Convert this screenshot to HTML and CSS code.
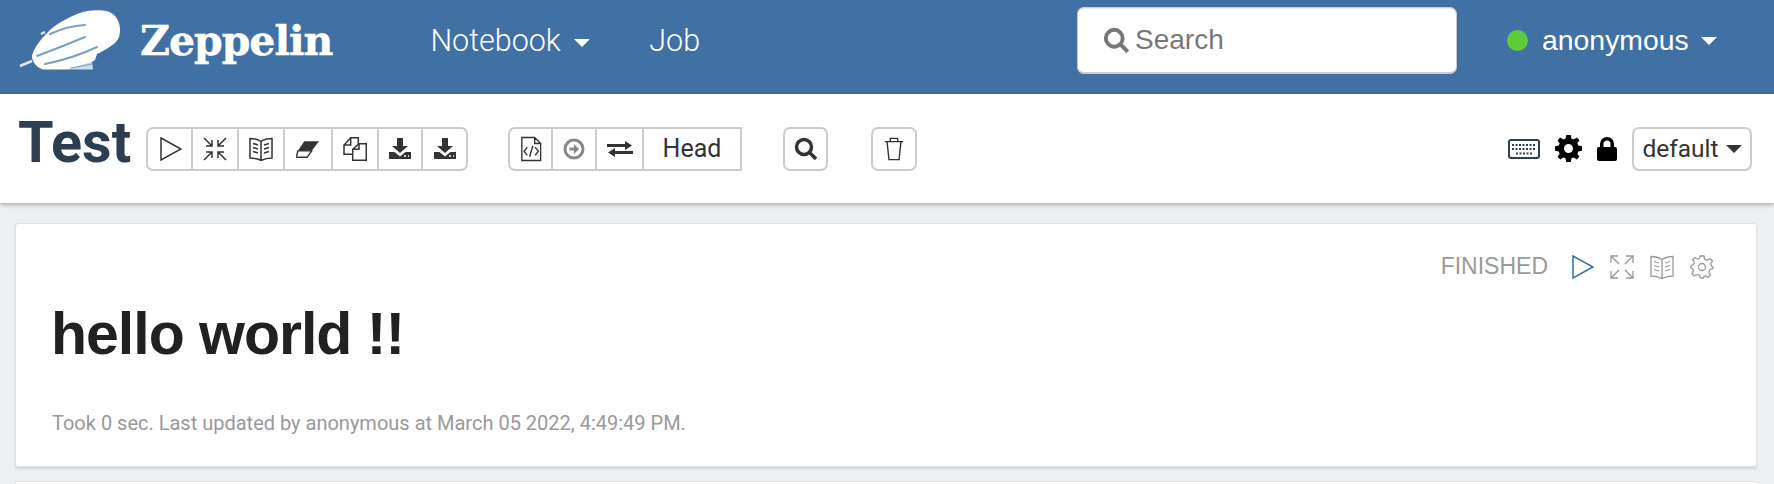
FILE: index.html
```html
<!DOCTYPE html>
<html lang="en">
<head>
    <meta charset="UTF-8">
    <title>Zeppelin</title>
    <link rel="stylesheet" href="styles.css">
</head>
<body>
    <!--顶部导航-->
    <nav class="navbar">
        <svg class="logo" viewBox="0 0 102 62" width="102" height="62">
            <path class="logo-body" d="M13 46C15 38 20 31 31 20C40 12 55 4 68 1C75 0 84 0 89 1.500C97 4 101 12 101 20C101 28 98 32 92 36C86 40 82 42 78 44L76 50C70 54 62 56 48 59.500H24C19 58 13 53 13 46Z"/>
            <path class="logo-line" d="M31 24Q48 16 66 15M18 46Q42 37 66 27M26 54Q55 48 78 37"/>
            <path class="logo-fin" d="M1 56L13 51M22 24L26 22"/>
            <path class="logo-gondola" d="M48 59.500L73 52L74 59.500Z"/>
            <path class="logo-line thin" d="M52 58L73 54"/>
        </svg>
        <a class="brand">Zeppelin</a>
        <a class="nav-link notebook">Notebook <span class="caret"></span></a>
        <a class="nav-link job">Job</a>
        <div class="search-box">
            <svg class="search-icon" viewBox="0 0 24 24" width="27" height="27"><circle cx="10" cy="10" r="7.5"/><path d="M15.5 15.5L22 22"/></svg>
            <span class="search-text">Search</span>
        </div>
        <div class="user">
            <span class="status-dot"></span>
            <span class="user-name">anonymous</span>
            <span class="caret"></span>
        </div>
    </nav>

    <!--工具栏-->
    <header class="toolbar">
        <h1 class="note-title">Test</h1>
        <div class="btn-group group-run">
            <span class="btn w43"><svg class="ico" viewBox="0 0 24 24"><path d="M3 1L23 12L3 23Z"/></svg></span>
            <span class="btn w46"><svg class="ico" viewBox="0 0 24 24"><path d="M1 1L9 9M3 9H9V3M23 1L15 9M21 9H15V3M1 23L9 15M3 15H9V21M23 23L15 15M21 15H15V21"/></svg></span>
            <span class="btn w46"><svg class="ico" viewBox="0 0 24 24"><path d="M12 4.500C9 2.500 5 1.500 1 1.500V21C5 21 9 22 12 23.500C15 22 19 21 23 21V1.500C19 1.500 15 2.500 12 4.500ZM12 4.500V23.500M4 6.500L9 8M4 10.500L9 12M4 14.500L9 16M20 6.500L15 8M20 10.500L15 12M20 14.500L15 16"/></svg></span>
            <span class="btn w48"><svg class="ico" viewBox="0 0 26 20"><path class="solid" d="M9 1.500H25L17 12H2Z"/><path d="M2 12H17L12 19H1.500Q-.5 18.500 1 16.500Z"/></svg></span>
            <span class="btn w46"><svg class="ico" viewBox="0 0 24 24"><path d="M9.700 17.300H1V8L7.700 .7H15.300V6.700M7.700 .7V8H1"/><path d="M9.700 12.300L16 6.700H23.300V23.300H9.700ZM16 6.700V12.300H9.700"/></svg></span>
            <span class="btn w44"><svg class="ico" viewBox="0 0 24 24"><path class="solid" d="M9 1H15V9H20L12 16L4 9H9Z"/><path class="solid" d="M1 15H6.500L12 19.500L17.500 15H23V22H1Z"/><path class="dots" d="M16 19H18M20 19H21"/></svg></span>
            <span class="btn w45"><svg class="ico" viewBox="0 0 24 24"><path class="solid" d="M9 1H15V9H20L12 16L4 9H9Z"/><path class="solid" d="M1 15H6.500L12 19.500L17.500 15H23V22H1Z"/><path class="dots" d="M16 19H18M20 19H21"/></svg></span>
        </div>
        <div class="btn-group group-rev">
            <span class="btn w41"><svg class="ico tall" viewBox="0 0 24 28"><path d="M2 1.500H16L22.500 8V26.500H2ZM16 1.500V8H22.500M8 12L4.500 16.500L8 21M16.500 12L20 16.500L16.500 21M14 10.500L10.500 22.500"/></svg></span>
            <span class="btn w44 off"><svg class="ico" viewBox="0 0 24 24"><circle class="ring" cx="12" cy="12" r="9"/><path class="grey" d="M7.500 10.500H12V7L17 12L12 17V13.500H7.500Z"/></svg></span>
            <span class="btn w47 after-off"><svg class="ico wide" viewBox="0 0 26 18"><path class="solid" d="M0 4H18V1L25 5.500L18 10V7H0ZM26 11H8V8L1 12.500L8 17V14H26Z"/></svg></span>
            <span class="btn head">Head</span>
        </div>
        <span class="btn single search-btn"><svg class="ico bold" viewBox="0 0 24 24"><circle cx="10" cy="10" r="7.500"/><path d="M15.500 15.500L22 22"/></svg></span>
        <span class="btn single trash-btn"><svg class="ico" viewBox="0 0 24 26"><path d="M2 5H22M8 5V1.500H16V5M4.500 5L6.500 24.500H17.500L19.500 5"/></svg></span>
        <div class="toolbar-right">
            <svg class="keyboard" viewBox="0 0 32 20" width="32" height="20"><rect x="1" y="1" width="30" height="18" rx="2"/><path d="M4 6H28M4 10H28M8 14.500H24" stroke-dasharray="2 1.500"/></svg>
            <svg class="gear-solid" viewBox="0 0 24 24" width="27" height="27"><path d="M10 0H14L14.700 3.300L16.600 4.100L19.400 2.300L21.700 4.600L19.900 7.400L20.700 9.300L24 10V14L20.700 14.700L19.900 16.600L21.700 19.400L19.400 21.700L16.600 19.900L14.700 20.700L14 24H10L9.300 20.700L7.400 19.900L4.600 21.700L2.300 19.400L4.100 16.600L3.300 14.700L0 14V10L3.300 9.300L4.100 7.400L2.300 4.600L4.600 2.300L7.400 4.100L9.300 3.300ZM12 8A4 4 0 1 0 12 16A4 4 0 1 0 12 8Z" fill-rule="evenodd"/></svg>
            <svg class="lock" viewBox="0 0 20 24" width="20" height="24"><path d="M0 12Q0 10 2 10H3V7A7 7 0 0 1 17 7V10H18Q20 10 20 12V22Q20 24 18 24H2Q0 24 0 22ZM6.500 10H13.500V7A3.500 3.500 0 0 0 6.500 7Z" fill-rule="evenodd"/></svg>
            <span class="btn single select">default<span class="caret dark"></span></span>
        </div>
    </header>

    <!--段落-->
    <main class="notebook-body">
        <section class="paragraph">
            <div class="para-head">
                <span class="status">FINISHED</span>
                <svg class="para-ico run" viewBox="0 0 24 24"><path d="M3 1L23 12L3 23Z"/></svg>
                <svg class="para-ico" viewBox="0 0 24 24"><path d="M9 9L1 1M1 8V1H8M15 9L23 1M16 1H23V8M9 15L1 23M1 16V23H8M15 15L23 23M16 23H23V16"/></svg>
                <svg class="para-ico" viewBox="0 0 24 24"><path d="M12 4.500C9 2.500 5 1.500 1 1.500V21C5 21 9 22 12 23.500C15 22 19 21 23 21V1.500C19 1.500 15 2.500 12 4.500ZM12 4.500V23.500M4 6.500L9 8M4 10.500L9 12M4 14.500L9 16M20 6.500L15 8M20 10.500L15 12M20 14.500L15 16"/></svg>
                <svg class="para-ico" viewBox="0 0 24 24"><circle cx="12" cy="12" r="3.500"/><path d="M10 1H14L14.700 4.200L17.300 5.300L20 3.500L22.500 6L20.700 8.700L21.800 11.300L23 12L23 13.500L20 14.500L19 17L20.500 20L18 22.500L15.300 20.700L14 21.500L13.500 23H10.500L9.700 20.500L7 19.500L4 21L2 18.500L3.500 16L2.500 13.500L1 13V10.500L3.500 9.500L4.300 7.300L2.700 4.500L5 2.500L7.500 4L9.500 3.300Z"/></svg>
            </div>
            <h2 class="para-result">hello world !!</h2>
            <p class="para-foot">Took 0 sec. Last updated by anonymous at March 05 2022, 4:49:49 PM.</p>
        </section>
        <section class="paragraph next"></section>
    </main>
</body>
</html>
```

FILE: styles.css
```css
* {
    margin: 0;
    padding: 0;
    box-sizing: border-box;
}
html, body {
    height: 484px;
    overflow: hidden;
}
body {
    background: #ecf0f1;
    font-family: "Roboto", "Liberation Sans", sans-serif;
    color: #333;
}

/* navbar */
.navbar {
    display: flex;
    align-items: center;
    height: 94px;
    padding: 0 0 13px 19px;
    background: #4170a5;
    color: #fff;
}
.logo {
    flex: none;
}
.logo-body {
    fill: #fff;
}
.logo-line {
    fill: none;
    stroke: #7d9fc5;
    stroke-width: 2;
    stroke-linecap: round;
}
.logo-line.thin {
    stroke-width: 1.200;
}
.logo-fin {
    fill: none;
    stroke: #dfe8f1;
    stroke-width: 2.500;
}
.logo-gondola {
    fill: #cfdcea;
}
.brand {
    margin-left: 19px;
    font-family: "DejaVu Serif", serif;
    font-size: 41px;
    font-weight: 700;
    letter-spacing: -1px;
    -webkit-text-stroke: .5px #fff;
}
.nav-link {
    font-family: "Roboto", sans-serif;
    font-size: 30.500px;
    font-weight: 300;
}
.notebook {
    margin-left: 98px;
}
.job {
    margin-left: 59px;
}
.caret {
    display: inline-block;
    width: 0;
    height: 0;
    margin-left: 6px;
    vertical-align: middle;
    border-top: 8px solid #fff;
    border-left: 8px solid transparent;
    border-right: 8px solid transparent;
}
.caret.dark {
    margin-left: 7px;
    border-top-color: #333;
}
.search-box {
    display: flex;
    align-items: center;
    width: 380px;
    height: 67px;
    margin-left: auto;
    padding-left: 25px;
    border-radius: 7px;
    border: 1px solid #ccc;
    border-bottom-width: 2px;
    background: #fff;
    box-shadow: inset 0 1px 1px rgba(0, 0, 0, .075);
}
.search-icon {
    fill: none;
    stroke: #777;
    stroke-width: 3.500;
}
.search-text {
    margin-left: 5px;
    font-size: 28px;
    color: #777;
    font-family: "Liberation Sans", sans-serif;
}
.user {
    display: flex;
    align-items: center;
    width: 267px;
    margin-left: 50px;
    font-family: "Liberation Sans", sans-serif;
    font-size: 28.400px;
}
.status-dot {
    width: 21px;
    height: 21px;
    border-radius: 50%;
    background: #5fcb3a;
}
.user-name {
    margin-left: 14px;
}
.user .caret {
    margin-left: 12px;
}

/* toolbar */
.toolbar {
    display: flex;
    align-items: center;
    height: 109px;
    padding-left: 18px;
    background: #fff;
    box-shadow: 0 2px 4px rgba(0, 0, 0, .25);
}
.note-title {
    width: 128px;
    margin-bottom: 12px;
    font-size: 57.500px;
    font-weight: 700;
    color: #2c3e50;
    line-height: 1;
}
.btn-group {
    display: flex;
    height: 44px;
    border: 2px solid #ccc;
    border-radius: 7px;
    background: #fff;
}
.btn {
    display: flex;
    align-items: center;
    justify-content: center;
    height: 100%;
    font-family: "Roboto", sans-serif;
    font-size: 25px;
    color: #333;
}
.btn-group .btn + .btn {
    border-left: 2px solid #ccc;
}
.btn-group .off,
.btn-group .after-off {
    border-left-color: #ddd;
}
.w41 { width: 41px; }
.w43 { width: 43px; }
.w44 { width: 44px; }
.w45 { width: 45px; }
.w46 { width: 46px; }
.w47 { width: 47px; }
.w48 { width: 48px; }
.head {
    flex: 1;
}
.group-run {
    width: 322px;
}
.group-rev {
    width: 234px;
    margin-left: 40px;
    border-radius: 7px 0 0 7px;
}
.ico {
    width: 24px;
    height: 24px;
    fill: none;
    stroke: #333;
    stroke-width: 1.500;
}
.ico.tall {
    width: 22px;
    height: 26px;
}
.ico.wide {
    width: 26px;
    height: 18px;
}
.ico.bold {
    stroke-width: 3.500;
}
.ico .solid {
    fill: #333;
    stroke: none;
}
.ico .dots {
    stroke: #fff;
    stroke-width: 1.500;
}
.ico .ring {
    stroke: #888;
    stroke-width: 3;
}
.ico .grey {
    fill: #888;
    stroke: none;
}
.single {
    height: 44px;
    border: 2px solid #ccc;
    border-radius: 7px;
}
.search-btn {
    width: 45px;
    margin-left: 41px;
}
.trash-btn {
    width: 46px;
    margin-left: 43px;
}
.toolbar-right {
    display: flex;
    align-items: center;
    margin-left: auto;
    margin-right: 22px;
}
.keyboard {
    fill: none;
    stroke: #2c3e50;
    stroke-width: 2;
}
.gear-solid {
    margin-left: 15px;
}
.lock {
    margin-left: 15px;
}
.select {
    width: 120px;
    margin-left: 15px;
    font-size: 24.500px;
}

/* paragraph */
.notebook-body {
    padding: 20px 17px 0 15px;
}
.paragraph {
    height: 244px;
    padding: 29px 42px 0 36px;
    border: 1px solid #dde3e6;
    border-radius: 3px;
    background: #fff;
    box-shadow: 0 2px 2px rgba(0, 0, 0, .1);
}
.paragraph.next {
    height: 3px;
    margin-top: 14px;
    padding: 0;
    border-bottom: 0;
    box-shadow: none;
}
.para-head {
    display: flex;
    align-items: center;
    justify-content: flex-end;
    gap: 16px;
}
.status {
    margin-right: 6px;
    font-family: "Liberation Sans", sans-serif;
    font-size: 23px;
    color: #999;
}
.para-ico {
    width: 24px;
    height: 24px;
    fill: none;
    stroke: #999;
    stroke-width: 1.300;
}
.para-ico.run {
    stroke: #3071a9;
    stroke-width: 1.500;
}
.para-result {
    margin-top: 18px;
    margin-left: -1px;
    font-family: "Liberation Sans", sans-serif;
    font-size: 59px;
    font-weight: 700;
    letter-spacing: -1px;
    line-height: 72px;
    color: #212121;
}
.para-foot {
    margin-top: 41px;
    font-size: 20px;
    color: #999;
}
```
